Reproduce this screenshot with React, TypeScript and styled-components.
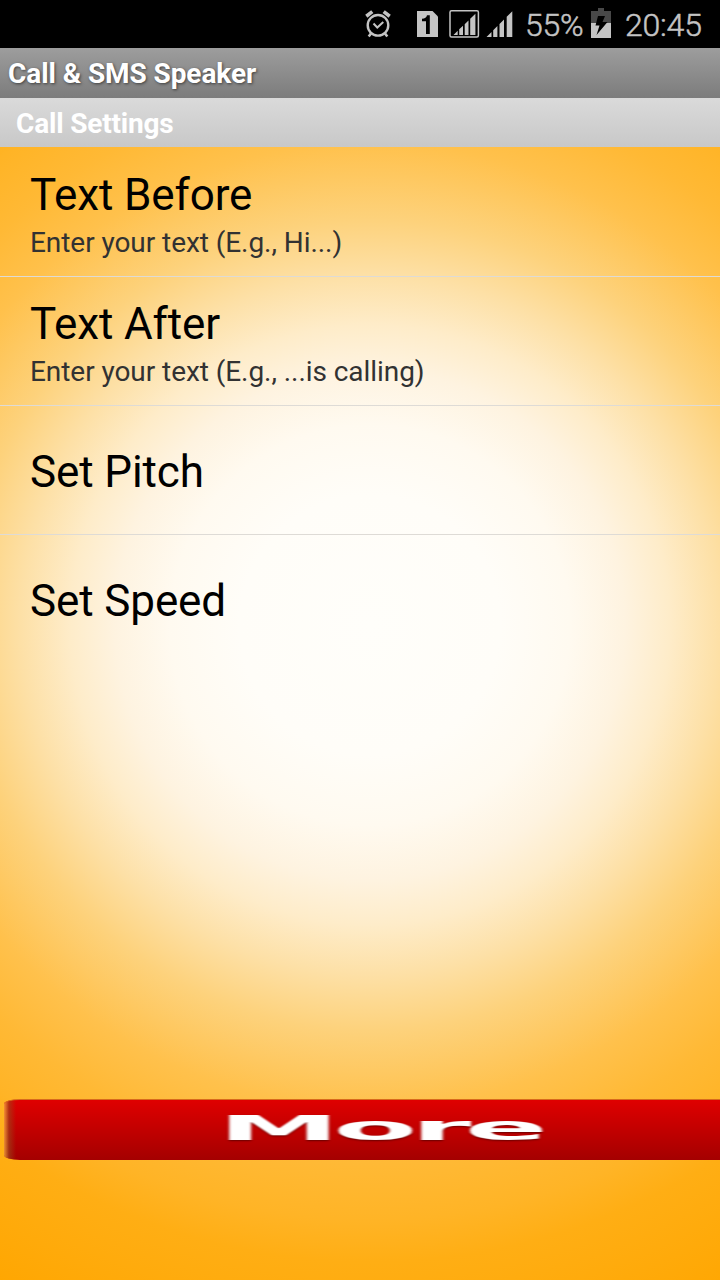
import React from "react";
import styled, { createGlobalStyle } from "styled-components";

const GlobalStyle = createGlobalStyle`
  body { margin: 0; background: #000; }
  * { box-sizing: border-box; }
`;

const Screen = styled.div`
  width: 720px;
  height: 1280px;
  overflow: hidden;
  display: flex;
  flex-direction: column;
  font-family: Roboto, "Liberation Sans", sans-serif;
`;

const StatusBar = styled.div`
  flex: none;
  height: 48px;
  padding-right: 16px;
  background: #000;
  color: #c4c4c4;
  display: flex;
  justify-content: flex-end;
  align-items: center;
`;

const StatusIcons = styled.svg`
  display: block;
  width: 155px;
  height: 48px;
  margin-right: 9px;
`;

const StatusText = styled.span<{ $width: number }>`
  width: ${(p) => p.$width}px;
  font-size: 32px;
  line-height: 48px;
  padding-top: 2px;
  letter-spacing: -0.2px;
  font-weight: 300;
  white-space: nowrap;
  -webkit-text-stroke: 0.5px #c4c4c4;
`;

const BatteryIcon = styled.svg`
  display: block;
  width: 20px;
  height: 48px;
  margin: 0 14px 0 7px;
`;

const TitleBar = styled.header`
  flex: none;
  height: 50px;
  padding-left: 8px;
  background: linear-gradient(#9d9d9d, #7c7c7c);
  color: #fff;
  font-size: 28px;
  font-weight: 700;
  letter-spacing: -0.08px;
  line-height: 51px;
  text-shadow: 1px 1px 3px rgba(0, 0, 0, 0.55);
`;

const SectionBar = styled.h1`
  flex: none;
  margin: 0;
  height: 49px;
  padding-left: 16px;
  background: linear-gradient(#dadada, #c8c8c8);
  color: #fff;
  font-size: 28px;
  font-weight: 700;
  letter-spacing: -0.18px;
  line-height: 51px;
`;

const Content = styled.main`
  flex: 1;
  min-height: 0;
  display: flex;
  flex-direction: column;
  background: radial-gradient(
    circle 760px at 370px 478px,
    #fffefa 0,
    #fffdf8 130px,
    #fffaf0 200px,
    #fef3e0 255px,
    #feecc9 300px,
    #fde0a6 350px,
    #fdd27c 405px,
    #fec860 450px,
    #ffc14c 482px,
    #ffb935 540px,
    #ffb426 595px,
    #ffae14 637px,
    #ffaa0a 700px,
    #ffa600 760px
  );
`;

const List = styled.ul`
  flex: 1;
  margin: 0;
  padding: 1px 0 0;
  list-style: none;
`;

const Item = styled.li<{ $last?: boolean }>`
  height: 129px;
  padding: 4px 30px 0;
  border-bottom: 1px solid ${(p) => (p.$last ? "transparent" : "#dedbd6")};
  display: flex;
  flex-direction: column;
  justify-content: center;
`;

const ItemTitle = styled.span`
  color: #000;
  font-size: 44px;
  letter-spacing: -0.12px;
  line-height: 52px;
`;

const ItemHint = styled.span`
  color: #323232;
  font-size: 28px;
  letter-spacing: -0.06px;
  line-height: 33px;
  margin-top: 5px;
`;

const MoreButton = styled.button`
  flex: none;
  width: 716px;
  height: 61px;
  margin: 0 0 120px 4px;
  padding: 0 0 0 214px;
  border: 0;
  border-top: 1px solid #d86a1c;
  border-radius: 16px 0 0 16px / 5px 0 0 5px;
  background:
    linear-gradient(90deg, rgba(255, 190, 70, 0.75) 0, rgba(150, 80, 30, 0.55) 5px, rgba(120, 20, 10, 0) 12px),
    linear-gradient(#df0000, #a40000);
  display: flex;
`;

const MoreLabel = styled.span`
  display: block;
  font: 700 34px/57px "DejaVu Sans", sans-serif;
  letter-spacing: -1.8px;
  color: #fff;
  transform: scaleX(3.6);
  transform-origin: left center;
  text-shadow: 0 1px 1px rgba(70, 0, 0, 0.7);
  filter: blur(0.4px);
`;

const items = [
  { title: "Text Before", hint: "Enter your text (E.g., Hi...)" },
  { title: "Text After", hint: "Enter your text (E.g., ...is calling)" },
  { title: "Set Pitch" },
  { title: "Set Speed" },
];

export default function App() {
  return (
    <Screen>
      <GlobalStyle />
      <StatusBar>
        <StatusIcons viewBox="361 0 155 48">
          <g fill="none" stroke="#c4c4c4">
            <circle cx="378" cy="25.3" r="10.3" strokeWidth="2.4" />
            <path d="M373.5 23.5l3.8 4 6-5.5" strokeWidth="2" />
            <path d="M366.3 16.2l6-4.6M389.7 16.2l-6-4.6" strokeWidth="3.6" />
            <path d="M371 33.5l-2.3 3M385 33.5l2.3 3" strokeWidth="2.6" />
            <rect x="450" y="10.7" width="28.4" height="26.3" rx="1.5" strokeWidth="1.5" />
          </g>
          <path d="M417 11h15.5l5.5 5.5V37h-21z" fill="#c4c4c4" />
          <path d="M422 18.7c3 0 4.5-1.4 5-3.5h2.8V34H426V21.2h-4z" fill="#000" />
          <g fill="#c4c4c4">
            <path d="M453.5 35l4.2-4.2V35zM459.2 29.3l3.8-3.5V35h-3.8zM464.7 24.2l3.8-3.8V35h-3.8zM470.2 18.7l5.2-5V35h-5.2z" />
            <path d="M486.5 37l5-5v5zM493.2 30.2l4.2-4.2v11h-4.2zM499.5 24l4.5-4.5V37h-4.5zM506.7 16.8l5.6-5.6V37h-5.6z" />
          </g>
        </StatusIcons>
        <StatusText $width={59}>55%</StatusText>
        <BatteryIcon viewBox="591 0 20 48">
          <path d="M591 11h7V8h6v3h7v12h-20z" fill="#484848" />
          <path d="M591 23h20v15h-20z" fill="#c4c4c4" />
          <path d="M598 16h7l-2.5 6h5L596.5 35l3-9.5h-4z" fill="#000" />
        </BatteryIcon>
        <StatusText $width={79}>20:45</StatusText>
      </StatusBar>
      <TitleBar>Call &amp; SMS Speaker</TitleBar>
      <SectionBar>Call Settings</SectionBar>
      <Content>
        <List>
          {items.map((item, i) => (
            <Item key={item.title} $last={i === items.length - 1}>
              <ItemTitle>{item.title}</ItemTitle>
              {item.hint && <ItemHint>{item.hint}</ItemHint>}
            </Item>
          ))}
        </List>
        <MoreButton>
          <MoreLabel>More</MoreLabel>
        </MoreButton>
      </Content>
    </Screen>
  );
}
